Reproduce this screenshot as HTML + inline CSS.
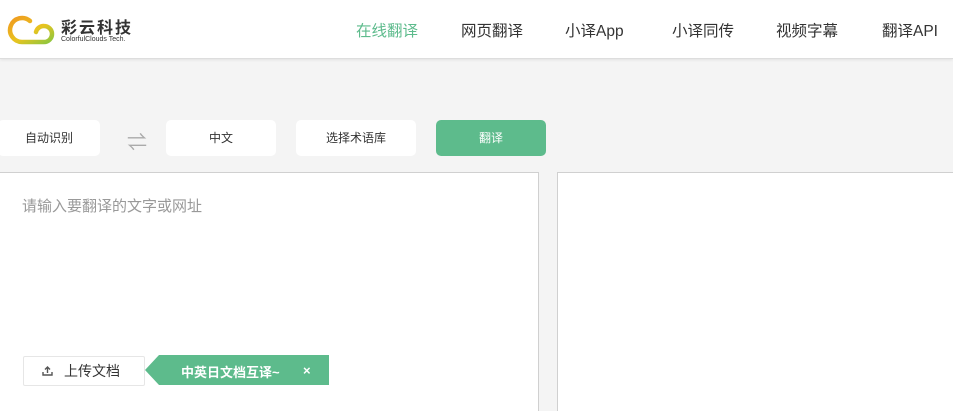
<!DOCTYPE html>
<html><head><meta charset="utf-8"><style>
*{margin:0;padding:0;box-sizing:border-box}
html,body{width:953px;height:411px;overflow:hidden}
body{background:#f4f4f4;font-family:"Liberation Sans","Noto Sans CJK SC",sans-serif;position:relative}
.hd{position:absolute;left:0;top:0;width:953px;height:59px;background:#fff;border-bottom:1px solid #ddd;box-shadow:0 1px 3px rgba(0,0,0,.08)}
.nav{position:absolute;top:19px;font-size:15.5px;color:#333;white-space:nowrap}
.btn{position:absolute;top:120px;height:36px;background:#fff;border-radius:5px;font-size:12px;color:#333;text-align:center;line-height:36px}
.box{position:absolute;top:172px;height:245px;background:#fff;border:1px solid #d0d0d0}
</style></head><body>
<div class="hd">
<svg style="position:absolute;left:7px;top:12px" width="48" height="34" viewBox="0 0 48 34">
<defs><linearGradient id="g" x1="0" y1="0" x2="1" y2="1"><stop offset="0" stop-color="#f09a20"/><stop offset=".55" stop-color="#e8c420"/><stop offset="1" stop-color="#8cc63f"/></linearGradient></defs>
<path d="M23 9 A12 12 0 1 0 15 30 L37 30 A8 8 0 0 0 37 14 A8 8 0 0 0 29 20" fill="none" stroke="url(#g)" stroke-width="4.5" stroke-linecap="round"/>
</svg>
<div style="position:absolute;left:61px;top:14px;font-size:16px;font-weight:bold;color:#333;letter-spacing:2px">彩云科技</div>
<div style="position:absolute;left:61px;top:36px;font-size:7px;color:#333">ColorfulClouds Tech.</div>
<div class="nav" style="left:356px;color:#5dbb8c">在线翻译</div>
<div class="nav" style="left:461px">网页翻译</div>
<div class="nav" style="left:565px">小译App</div>
<div class="nav" style="left:672px">小译同传</div>
<div class="nav" style="left:776px">视频字幕</div>
<div class="nav" style="left:882px">翻译API</div>
</div>
<div class="btn" style="left:-2px;width:102px">自动识别</div>
<div style="position:absolute;left:127px;top:126px;font-size:20px;color:#aaa">⇌</div>
<div class="btn" style="left:166px;width:110px">中文</div>
<div class="btn" style="left:296px;width:120px">选择术语库</div>
<div class="btn" style="left:436px;width:110px;background:#5dbb8c;color:#fff">翻译</div>
<div class="box" style="left:-1px;width:540px"></div>
<div class="box" style="left:557px;width:400px"></div>
<div style="position:absolute;left:22px;top:195px;font-size:15px;color:#999">请输入要翻译的文字或网址</div>
<div style="position:absolute;left:23px;top:356px;width:122px;height:30px;background:#fff;border:1px solid #e6e6e6;border-radius:2px;font-size:14px;color:#333;line-height:28px">
<svg style="position:absolute;left:18px;top:9px" width="11" height="10" viewBox="0 0 11 10"><path d="M5.5 7V1M3 3.5L5.5 1 8 3.5M1 6v3h9V6" fill="none" stroke="#555" stroke-width="1.4"/></svg>
<span style="position:absolute;left:40px">上传文档</span></div>
<svg style="position:absolute;left:145px;top:355px" width="184" height="30"><polygon points="0,15 14,0 184,0 184,30 14,30" fill="#5dbb8c"/></svg>
<div style="position:absolute;left:181px;top:362px;font-size:13px;font-weight:bold;color:#fff">中英日文档互译~</div>
<div style="position:absolute;left:303px;top:363px;font-size:13px;font-weight:bold;color:#fff">×</div>
</body></html>
